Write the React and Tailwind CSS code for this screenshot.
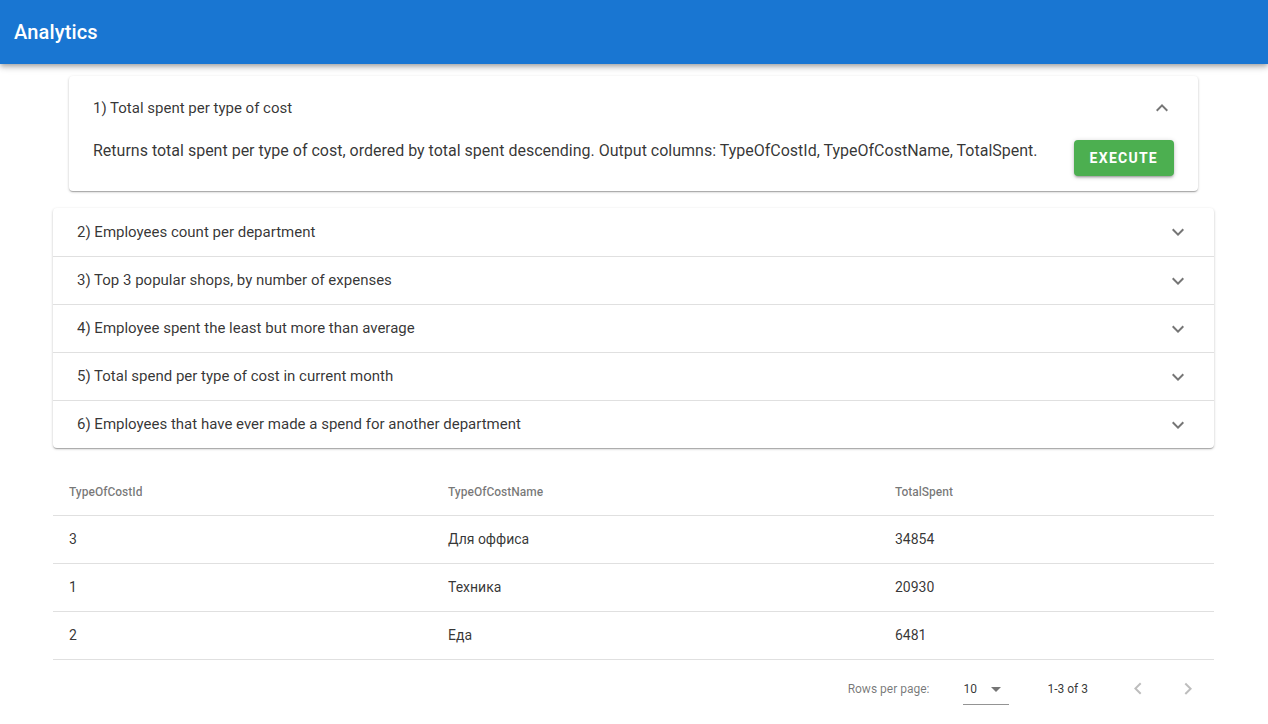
import React from "react";

const ExpandMore = ({ up = false }) => (
  <svg width="24" height="24" viewBox="0 0 24 24" className={up ? "rotate-180" : ""} fill="rgba(0,0,0,0.54)">
    <path d="M16.59 8.59L12 13.17 7.41 8.59 6 10l6 6 6-6z" />
  </svg>
);

const panels = [
  "2) Employees count per department",
  "3) Top 3 popular shops, by number of expenses",
  "4) Employee spent the least but more than average",
  "5) Total spend per type of cost in current month",
  "6) Employees that have ever made a spend for another department",
];

const rows = [
  ["3", "Для оффиса", "34854"],
  ["1", "Техника", "20930"],
  ["2", "Еда", "6481"],
];

export default function App() {
  return (
    <div className="min-h-screen bg-white font-[Roboto,'Noto_Sans',sans-serif]">
      <header className="h-16 bg-[#1976d2] flex items-center pl-[14px] shadow-[0_2px_4px_-1px_rgba(0,0,0,0.2),0_4px_5px_0_rgba(0,0,0,0.14),0_1px_10px_0_rgba(0,0,0,0.12)] relative z-10">
        <h1 className="text-white text-[20px] font-medium leading-none tracking-[0.0075em]">Analytics</h1>
      </header>

      <main className="mx-[53px] w-[1161px]">
        {/* Expanded panel */}
        <section className="mt-3 mx-4 mb-[17px] bg-white rounded shadow-[0_1px_3px_0_rgba(0,0,0,0.2),0_1px_1px_0_rgba(0,0,0,0.14),0_2px_1px_-1px_rgba(0,0,0,0.12)]">
          <div className="h-16 flex items-center justify-between px-6">
            <span className="text-[15px] text-black/80">1) Total spent per type of cost</span>
            <ExpandMore up />
          </div>
          <div className="flex items-start px-6 pb-[15px]">
            <p className="flex-1 text-[16px] leading-6 -mt-px text-black/80">
              Returns total spent per type of cost, ordered by total spent descending. Output columns: TypeOfCostId, TypeOfCostName, TotalSpent.
            </p>
            <button className="h-9 px-4 rounded bg-[#4caf50] text-white text-[14px] font-bold tracking-[0.09em] uppercase shadow-[0_1px_5px_0_rgba(0,0,0,0.2),0_2px_2px_0_rgba(0,0,0,0.14),0_3px_1px_-2px_rgba(0,0,0,0.12)]">
              Execute
            </button>
          </div>
        </section>

        {/* Collapsed panels */}
        <section className="bg-white rounded shadow-[0_1px_3px_0_rgba(0,0,0,0.2),0_1px_1px_0_rgba(0,0,0,0.14),0_2px_1px_-1px_rgba(0,0,0,0.12)]">
          {panels.map((p, i) => (
            <div
              key={p}
              className={`h-12 flex items-center justify-between px-6 ${i > 0 ? "border-t border-[#e0e0e0]" : ""}`}
            >
              <span className="text-[15px] text-black/80">{p}</span>
              <ExpandMore />
            </div>
          ))}
        </section>

        {/* Table */}
        <div className="mt-5">
          <div className="grid grid-cols-[395px_447px_1fr] h-12 items-center border-b border-[#e0e0e0] text-[12px] font-medium text-black/54">
            <div className="pl-4">TypeOfCostId</div>
            <div>TypeOfCostName</div>
            <div>TotalSpent</div>
          </div>
          {rows.map((r) => (
            <div key={r[0]} className="grid grid-cols-[395px_447px_1fr] h-12 items-center border-b border-[#e0e0e0] text-[14px] text-black/80">
              <div className="pl-4">{r[0]}</div>
              <div>{r[1]}</div>
              <div>{r[2]}</div>
            </div>
          ))}
          <div className="h-[58px] flex items-center justify-end pr-[2px] text-[12px] text-black/54">
            <span>Rows per page:</span>
            <div className="ml-[34px] w-[46px] h-8 relative flex items-center border-b border-black/42">
              <span className="text-black/80 text-[12px]">10</span>
              <svg width="24" height="24" viewBox="0 0 24 24" className="absolute right-[1px] top-1/2 -translate-y-1/2" fill="rgba(0,0,0,0.54)">
                <path d="M7 10l5 5 5-5z" />
              </svg>
            </div>
            <span className="ml-[38px] text-black/80">1-3 of 3</span>
            <div className="ml-[26px] flex gap-[2px]">
              <div className="w-12 h-12 flex items-center justify-center">
                <svg width="24" height="24" viewBox="0 0 24 24" fill="rgba(0,0,0,0.26)">
                  <path d="M15.41 16.09l-4.58-4.59 4.58-4.59L14 5.5l-6 6 6 6z" />
                </svg>
              </div>
              <div className="w-12 h-12 flex items-center justify-center">
                <svg width="24" height="24" viewBox="0 0 24 24" fill="rgba(0,0,0,0.26)">
                  <path d="M8.59 16.34l4.58-4.59-4.58-4.59L10 5.75l6 6-6 6z" />
                </svg>
              </div>
            </div>
          </div>
        </div>
      </main>
    </div>
  );
}
